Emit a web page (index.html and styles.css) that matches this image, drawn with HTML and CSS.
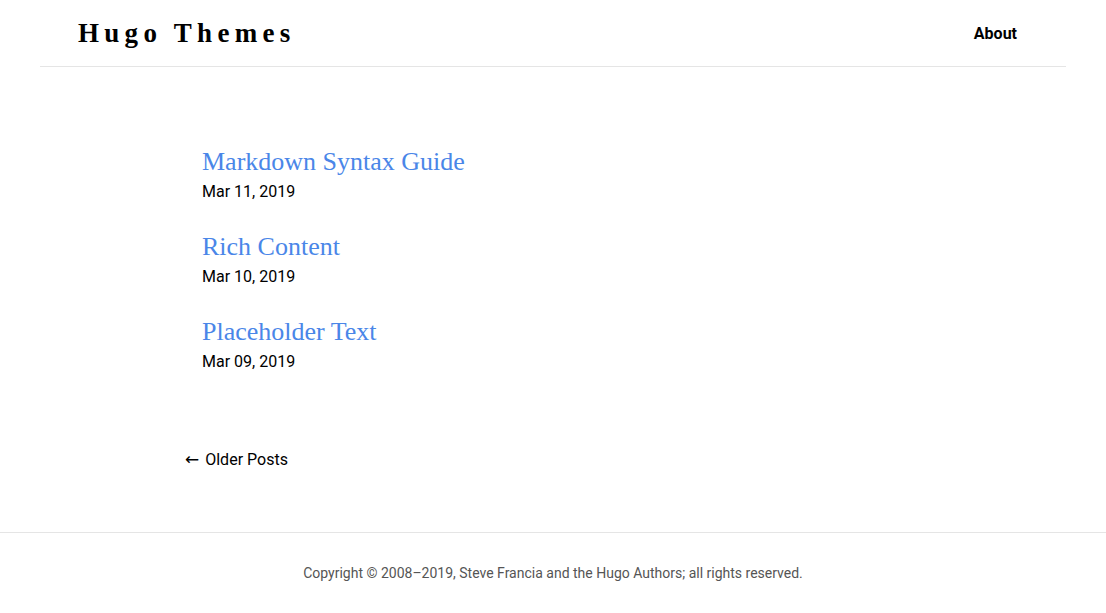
FILE: index.html
```html
<!DOCTYPE html>
<html lang="en">
<head>
<meta charset="utf-8">
<title>Hugo Themes</title>
<link rel="stylesheet" href="styles.css">
</head>
<body>
<header class="site-header">
  <a class="brand" href="#">Hugo Themes</a>
  <nav class="nav"><a href="#">About</a></nav>
</header>
<main class="content">
  <ul class="posts">
    <li class="post">
      <a class="post-title" href="#">Markdown Syntax Guide</a>
      <div class="post-date">Mar 11, 2019</div>
    </li>
    <li class="post">
      <a class="post-title" href="#">Rich Content</a>
      <div class="post-date">Mar 10, 2019</div>
    </li>
    <li class="post">
      <a class="post-title" href="#">Placeholder Text</a>
      <div class="post-date">Mar 09, 2019</div>
    </li>
  </ul>
  <div class="pager"><a href="#"><span class="arrow">&larr;</span> Older Posts</a></div>
</main>
<footer class="site-footer">
  Copyright © 2008–2019, Steve Francia and the Hugo Authors; all rights reserved.
</footer>
</body>
</html>
```
FILE: styles.css
```css
* { box-sizing: border-box; }
html, body { margin: 0; padding: 0; }
body {
  font-family: Roboto, "Liberation Sans", sans-serif;
  font-size: 16px;
  color: #000;
  background: #fff;
}
a { text-decoration: none; color: inherit; }

.site-header {
  margin: 0 40px;
  height: 67px;
  border-bottom: 1px solid #e5e5e5;
  display: flex;
  align-items: center;
  justify-content: space-between;
  padding: 0 49px 0 38px;
}
.brand {
  font-family: "Liberation Serif", "DejaVu Serif", serif;
  font-weight: bold;
  font-size: 27px;
  letter-spacing: 5.3px;
  color: #000;
  margin-top: 1px;
}
.nav a {
  font-weight: bold;
  font-size: 16px;
}

.content {
  padding: 78px 0 0 185px;
  height: 465px;
}
.posts {
  list-style: none;
  margin: 0;
  padding: 0 0 0 17px;
}
.post {
  height: 85px;
}
.post-title {
  display: block;
  font-family: "Liberation Serif", "DejaVu Serif", serif;
  font-size: 26px;
  line-height: 34px;
  color: #4a86e8;
}
.post-date {
  font-size: 16px;
  line-height: 26px;
}
.pager {
  margin-top: 49px;
  font-size: 16px;
}
.arrow {
  font-family: "DejaVu Sans", sans-serif;
  font-size: 17px;
  margin-right: 2px;
}

.site-footer {
  border-top: 1px solid #e5e5e5;
  text-align: center;
  font-size: 14px;
  color: #555;
  padding-top: 32px;
  height: 81px;
}
```
